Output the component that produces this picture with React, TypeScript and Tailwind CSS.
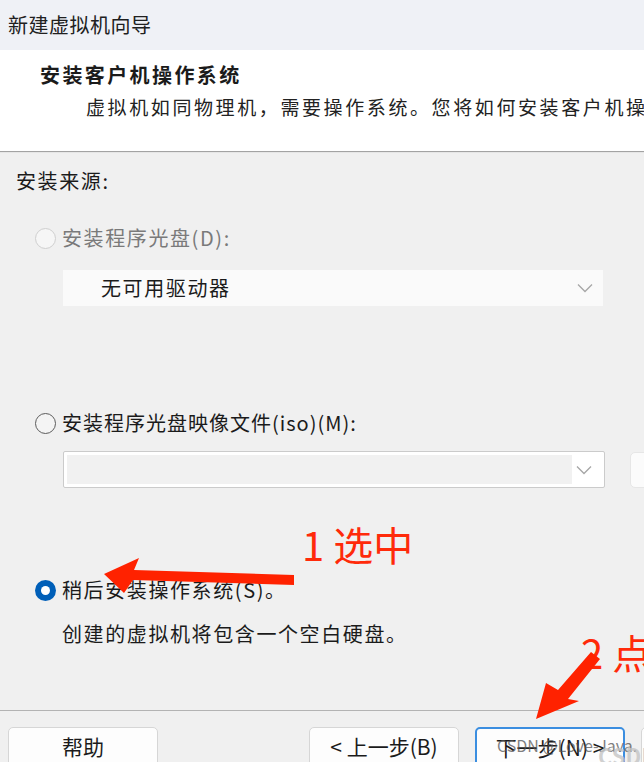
import React from 'react';

const font = { fontFamily: '"Noto Sans CJK SC", "Noto Sans", sans-serif' };

const Chevron: React.FC = () => (
  <svg width="16" height="10" viewBox="0 0 16 10" fill="none">
    <path d="M1 1.5 L8 8.5 L15 1.5" stroke="#a6a6a6" strokeWidth="1.3" />
  </svg>
);

const Radio: React.FC<{ state: 'disabled' | 'off' | 'on' }> = ({ state }) => {
  if (state === 'on') {
    return (
      <span className="w-[21px] h-[21px] rounded-full bg-[#005fb8] flex items-center justify-center shrink-0">
        <span className="w-[9px] h-[9px] rounded-full bg-white" />
      </span>
    );
  }
  return (
    <span
      className={
        state === 'disabled'
          ? 'w-[21px] h-[21px] rounded-full border border-[#cfcfcf] bg-[#f6f6f6] shrink-0'
          : 'w-[21px] h-[21px] rounded-full border-[1.5px] border-[#5c5c5c] bg-[#f4f4f4] shrink-0'
      }
    />
  );
};

const Button: React.FC<{ label: string; focused?: boolean; className?: string }> = ({ label, focused, className = '' }) => (
  <div
    className={
      'h-[40px] w-[150px] shrink-0 rounded-[5px] bg-[#fdfdfd] flex items-start justify-center pt-[3px] text-[21px] text-[#1b1b1b] ' +
      (focused ? 'border-2 border-[#3b8ee0] ' : 'border border-[#d6d6d6] ') +
      className
    }
  >
    {label}
  </div>
);

export default function App() {
  return (
    <div className="relative w-[644px] h-[762px] overflow-hidden bg-[#f0f0f0] text-[#1b1b1b]" style={font}>
      {/* Title bar */}
      <div className="h-[50px] bg-[#eff1f6] flex items-center pl-[8px] text-[20px] leading-none tracking-[0.5px] text-[#202020]">
        新建虚拟机向导
      </div>

      {/* Header */}
      <div className="h-[102px] bg-white border-b border-[#a3a3a3] pt-[10px] whitespace-nowrap overflow-hidden">
        <div className="pl-[40px] text-[20px] font-bold leading-[30px] tracking-[2.4px]">安装客户机操作系统</div>
        <div className="pl-[86px] mt-[2px] text-[19px] leading-[30px] tracking-[2.6px] text-[#222]">
          虚拟机如同物理机，需要操作系统。您将如何安装客户机操
        </div>
      </div>
      <div className="h-px bg-[#e6e6e6]" />

      {/* Body */}
      <div className="h-[557px] flex flex-col whitespace-nowrap text-[20px] tracking-[1.6px]">
        <div className="mt-[13px] pl-[16px] leading-[30px]">安装来源:</div>

        <div className="mt-[27px] pl-[35px] flex items-center gap-[6px] h-[30px]">
          <Radio state="disabled" />
          <span className="text-[#7a7a7a]">安装程序光盘(D):</span>
        </div>
        <div className="mt-[17px] ml-[63px] w-[540px] h-[36px] bg-[#fafafa] flex items-center justify-between pl-[38px] pr-[10px]">
          <span className="text-[#1b1b1b]">无可用驱动器</span>
          <Chevron />
        </div>

        <div className="mt-[102px] pl-[35px] flex items-center gap-[6px] h-[30px]">
          <Radio state="off" />
          <span className="tracking-[1px]">安装程序光盘映像文件(iso)(M):</span>
        </div>
        <div className="mt-[13px] flex items-center w-[700px]">
          <div className="ml-[63px] w-[542px] h-[37px] shrink-0 bg-white border border-[#cbcbcb] rounded-[2px] flex items-center p-[3px] pr-[12px]">
            <div className="h-full w-[505px] bg-[#f1f1f1]" />
            <div className="ml-auto">
              <Chevron />
            </div>
          </div>
          <div className="ml-[25px] w-[60px] h-[36px] rounded-[5px] bg-[#fbfbfb] border border-[#e6e6e6] shrink-0" />
        </div>

        <div className="mt-[87px] pl-[35px] flex items-center gap-[6px] h-[30px]">
          <Radio state="on" />
          <span>稍后安装操作系统(S)。</span>
        </div>
        <div className="mt-[14px] pl-[62px] leading-[30px]">创建的虚拟机将包含一个空白硬盘。</div>
      </div>

      {/* Footer */}
      <div className="border-t border-[#b3b3b3] pt-[16px] flex items-start whitespace-nowrap">
        <Button label="帮助" className="ml-[8px]" />
        <div className="ml-[151px] flex gap-[16px]">
          <Button label="< 上一步(B)" />
          <Button label="下一步(N) >" focused />
          <Button label="" />
        </div>
      </div>

      {/* Annotations */}
      <div className="absolute left-[302px] top-[516px] text-[40px] leading-[56px] text-[#ff2a0a] whitespace-nowrap">
        1 选中
      </div>
      <div className="absolute left-[581px] top-[624px] text-[40px] leading-[56px] text-[#ff2a0a] whitespace-nowrap">
        2 点
      </div>
      <svg className="absolute inset-0 pointer-events-none" width="644" height="762" viewBox="0 0 644 762">
        <polygon
          points="104,574 139,558 134,570 294,575 294,585 133,580 124,593"
          fill="#ff2200"
        />
        <polygon
          points="536,719 546,683 558,690 591,652 600,659 568,699 579,701"
          fill="#ff2200"
        />
      </svg>

      {/* Watermark */}
      <div className="absolute left-[497px] top-[735px] text-[16px] leading-[20px] text-[#555]/75 whitespace-nowrap">
        CSDN @Love-Java.
      </div>
      <div className="absolute left-[598px] top-[742px] text-[22px] leading-[26px] font-bold text-[#c4c4c4]/80 whitespace-nowrap">
        CSDN
      </div>
    </div>
  );
}
